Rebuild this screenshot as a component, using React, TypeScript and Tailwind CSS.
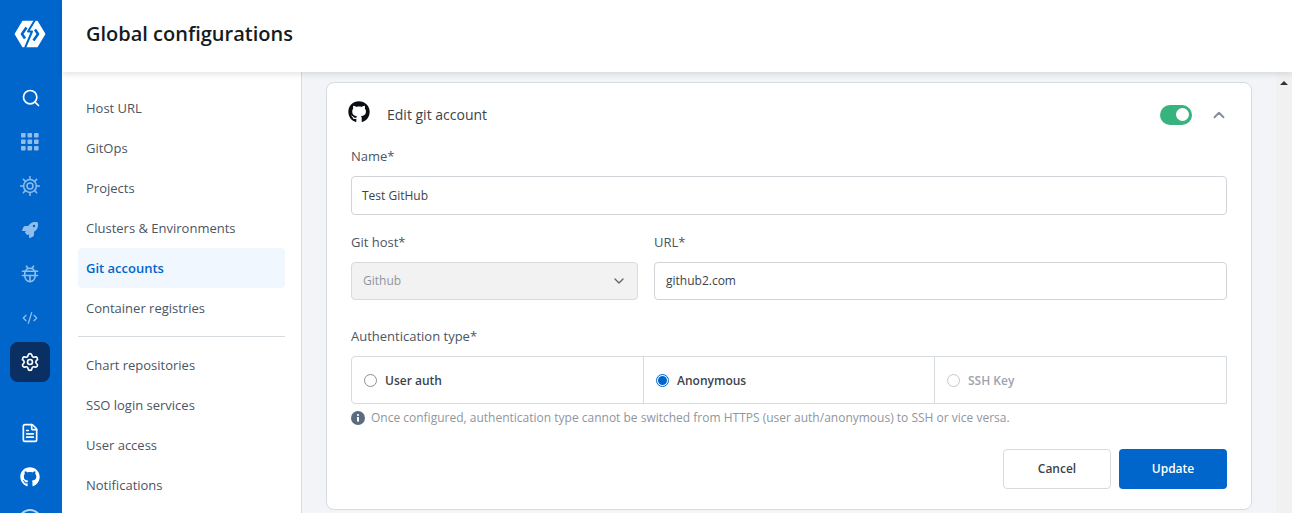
import { ChevronDown, ChevronUp, CodeXml, FileText, Search, Settings } from 'lucide-react';
import { FaGithub, FaRocket } from 'react-icons/fa';

const topNav = ['Host URL', 'GitOps', 'Projects', 'Clusters & Environments', 'Git accounts', 'Container registries'];
const bottomNav = ['Chart repositories', 'SSO login services', 'User access', 'Notifications'];

const Logo = () => (
  <svg width="32" height="32" viewBox="0 0 32 32" fill="none">
    <path d="M9 3.5H23L30.5 16L23 28.5H9L1.5 16Z" fill="#FFFFFF" stroke="#FFFFFF" strokeWidth="1.6" strokeLinejoin="round" />
    <path d="M12.5 9.5L8 16L11 20.5" stroke="#0066CC" strokeWidth="2.6" strokeLinejoin="round" />
    <path d="M19.5 22.5L24 16L21 11.5" stroke="#0066CC" strokeWidth="2.6" strokeLinejoin="round" />
    <path d="M21 2L14 13.5H18L11 30" stroke="#0066CC" strokeWidth="2" strokeLinejoin="round" />
  </svg>
);

const GridIcon = () => (
  <svg width="18" height="18" viewBox="0 0 18 18" fill="#8FBDEC">
    {[0, 6.5, 13].map((y) =>
      [0, 6.5, 13].map((x) => <rect key={`${x}-${y}`} x={x} y={y} width="4.6" height="4.6" rx="0.8" />),
    )}
  </svg>
);

const HelmIcon = () => (
  <svg width="20" height="20" viewBox="0 0 20 20" fill="none" stroke="#8FBDEC" strokeWidth="1.5">
    <circle cx="10" cy="10" r="6.4" />
    <circle cx="10" cy="10" r="3" />
    <path d="M10 0.6V3.6M10 16.4V19.4M0.6 10H3.6M16.4 10H19.4M3.4 3.4L5.5 5.5M14.5 14.5L16.6 16.6M16.6 3.4L14.5 5.5M5.5 14.5L3.4 16.6" strokeLinecap="round" />
  </svg>
);

const BugIcon = () => (
  <svg width="18" height="18" viewBox="0 0 18 18" fill="none" stroke="#8FBDEC" strokeWidth="1.6" strokeLinecap="round">
    <path d="M5.5 1.2L7 3.4M12.5 1.2L11 3.4" />
    <path d="M5 6C5 4.2 6.8 3.2 9 3.2C11.2 3.2 13 4.2 13 6" />
    <path d="M1.5 6.2H16.5" />
    <path d="M3.8 6.2V11C3.8 14.2 6.2 16.6 9 16.6C11.8 16.6 14.2 14.2 14.2 11V6.2" />
    <path d="M1.5 10.5H16.5" />
    <path d="M9 10.5V16.2" />
  </svg>
);

const InfoDot = () => (
  <svg width="14" height="14" viewBox="0 0 14 14" className="shrink-0">
    <circle cx="7" cy="7" r="7" fill="#5B6B80" />
    <rect x="6" y="6" width="2" height="4.6" fill="#FFFFFF" />
    <circle cx="7" cy="4" r="1.1" fill="#FFFFFF" />
  </svg>
);

const NavItem = ({ label }: { label: string }) => (
  <div
    className={`h-10 flex items-center px-2 pt-px rounded text-[13px] ${
      label === 'Git accounts' ? 'bg-[#f0f7ff] text-[#0066cc] font-semibold' : 'text-[#4b5563]'
    }`}
  >
    {label}
  </div>
);

const RadioCell = ({ label, state, width }: { label: string; state: 'off' | 'on' | 'disabled'; width: string }) => (
  <div className={`${width} flex items-center gap-2 px-3 pt-px border-r border-[#d6dbdf] last:border-r-0`}>
    <span
      className={`w-[13px] h-[13px] rounded-full border flex items-center justify-center ${
        state === 'on' ? 'border-[#0066cc]' : state === 'off' ? 'border-[#8a9097]' : 'border-[#c4c8cc]'
      }`}
    >
      {state === 'on' && <span className="w-[9px] h-[9px] rounded-full bg-[#0066cc]" />}
    </span>
    <span className={`text-[12px] font-semibold ${state === 'disabled' ? 'text-[#9ca3af]' : 'text-[#3b444c]'}`}>{label}</span>
  </div>
);

export default function App() {
  return (
    <div className="flex h-[513px] overflow-hidden bg-white font-['Open_Sans',sans-serif]">
      <aside className="w-[62px] shrink-0 bg-[#0066cc] flex flex-col items-center pr-[2px]">
        <div className="h-[76px] flex items-start pt-[18px] shrink-0">
          <Logo />
        </div>
        <div className="h-11 flex items-center justify-center shrink-0 ml-[2px]">
          <Search size={20} color="#ffffff" />
        </div>
        <div className="h-11 flex items-center justify-center shrink-0">
          <GridIcon />
        </div>
        <div className="h-11 flex items-center justify-center shrink-0">
          <HelmIcon />
        </div>
        <div className="h-11 flex items-center justify-center shrink-0">
          <FaRocket size={16} color="#8FBDEC" />
        </div>
        <div className="h-11 flex items-center justify-center shrink-0">
          <BugIcon />
        </div>
        <div className="h-11 flex items-center justify-center shrink-0">
          <CodeXml size={16} color="#8FBDEC" />
        </div>
        <div className="h-11 flex items-center justify-center shrink-0">
          <div className="w-10 h-10 rounded-lg bg-[#0a2f63] flex items-center justify-center">
            <Settings size={20} color="#ffffff" />
          </div>
        </div>
        <div className="h-[27px] shrink-0" />
        <div className="h-11 flex items-center justify-center shrink-0">
          <FileText size={20} color="#ffffff" />
        </div>
        <div className="h-11 flex items-center justify-center shrink-0">
          <FaGithub size={20} color="#ffffff" />
        </div>
        <div className="h-11 flex items-center justify-center shrink-0">
          <div className="w-6 h-6 rounded-full border-2 border-[#b5d3f2]" />
        </div>
      </aside>

      <div className="flex-1 flex flex-col min-w-0">
        <header className="relative z-10 h-[72px] shrink-0 bg-white flex items-center px-6 pb-1 shadow-[0_2px_6px_rgba(40,60,90,0.15)]">
          <h1 className="text-[20px] font-semibold text-[#151b21]">Global configurations</h1>
        </header>

        <div className="flex-1 flex min-h-0">
          <nav className="w-[240px] shrink-0 bg-white border-r border-[#d6dbdf] pt-4 pl-4 pr-4">
            {topNav.map((item) => (
              <NavItem key={item} label={item} />
            ))}
            <div className="h-px bg-[#d6dbdf] mt-2 mb-2" />
            {bottomNav.map((item) => (
              <NavItem key={item} label={item} />
            ))}
          </nav>

          <main className="flex-1 flex min-w-0 bg-[#f2f4f7]">
            <div className="flex-1 min-w-0 pl-6 pr-6 pt-[10px]">
              <div className="h-[428px] bg-white border border-[#d6dbdf] rounded-lg px-6">
                <div className="h-[63px] flex items-center">
                  <FaGithub size={22} color="#0b0f14" className="-mt-[5px] -ml-[3px]" />
                  <span className="ml-[17px] text-[14px] font-medium text-[#3b444c]">Edit git account</span>
                  <div className="ml-auto w-8 h-5 rounded-full bg-[#36b37e] flex items-center justify-end pr-[3px]">
                    <span className="w-[13px] h-[13px] rounded-full bg-white" />
                  </div>
                  <ChevronUp size={18} strokeWidth={2.5} color="#858d96" className="ml-[18px] -mr-px" />
                </div>

                <label className="block text-[13px] text-[#4b5563] leading-[20px]">Name*</label>
                <div className="mt-[10px] h-[39px] border border-[#d0d4d9] rounded flex items-center px-[10px] text-[12px] text-[#3b444c]">
                  Test GitHub
                </div>

                <div className="flex gap-4 mt-[17px]">
                  <div className="w-[287px]">
                    <label className="block text-[13px] text-[#4b5563] leading-[20px]">Git host*</label>
                    <div className="mt-[10px] h-[38px] border border-[#d6dbdf] rounded bg-[#f2f2f2] flex items-center justify-between pl-[11px] pr-[10px] text-[12px] text-[#8f969d]">
                      Github
                      <ChevronDown size={16} color="#5f6770" />
                    </div>
                  </div>
                  <div className="flex-1">
                    <label className="block text-[13px] text-[#4b5563] leading-[20px]">URL*</label>
                    <div className="mt-[10px] h-[38px] border border-[#d0d4d9] rounded flex items-center px-[11px] text-[12px] text-[#3b444c]">
                      github2.com
                    </div>
                  </div>
                </div>

                <label className="block text-[13px] text-[#4b5563] leading-[20px] mt-[26px]">Authentication type*</label>
                <div className="mt-[10px] h-[48px] border border-[#d6dbdf] rounded-l flex">
                  <RadioCell label="User auth" state="off" width="w-[292px]" />
                  <RadioCell label="Anonymous" state="on" width="w-[291px]" />
                  <RadioCell label="SSH Key" state="disabled" width="flex-1" />
                </div>

                <div className="mt-[5px] flex items-center gap-[6px] text-[12px] text-[#8f969d]">
                  <InfoDot />
                  Once configured, authentication type cannot be switched from HTTPS (user auth/anonymous) to SSH or vice versa.
                </div>

                <div className="mt-[22px] flex justify-end gap-2">
                  <button className="w-[108px] h-10 border border-[#d6dbdf] rounded text-[12px] font-semibold text-[#3b444c] bg-white">Cancel</button>
                  <button className="w-[108px] h-10 rounded text-[12px] font-semibold text-white bg-[#0066cc]">Update</button>
                </div>
              </div>
            </div>
            <div className="w-4 shrink-0 bg-[#f1f1f1] flex justify-center pt-[9px]">
              <div className="w-0 h-0 border-x-[4px] border-x-transparent border-b-[4px] border-b-[#333]" />
            </div>
          </main>
        </div>
      </div>
    </div>
  );
}
